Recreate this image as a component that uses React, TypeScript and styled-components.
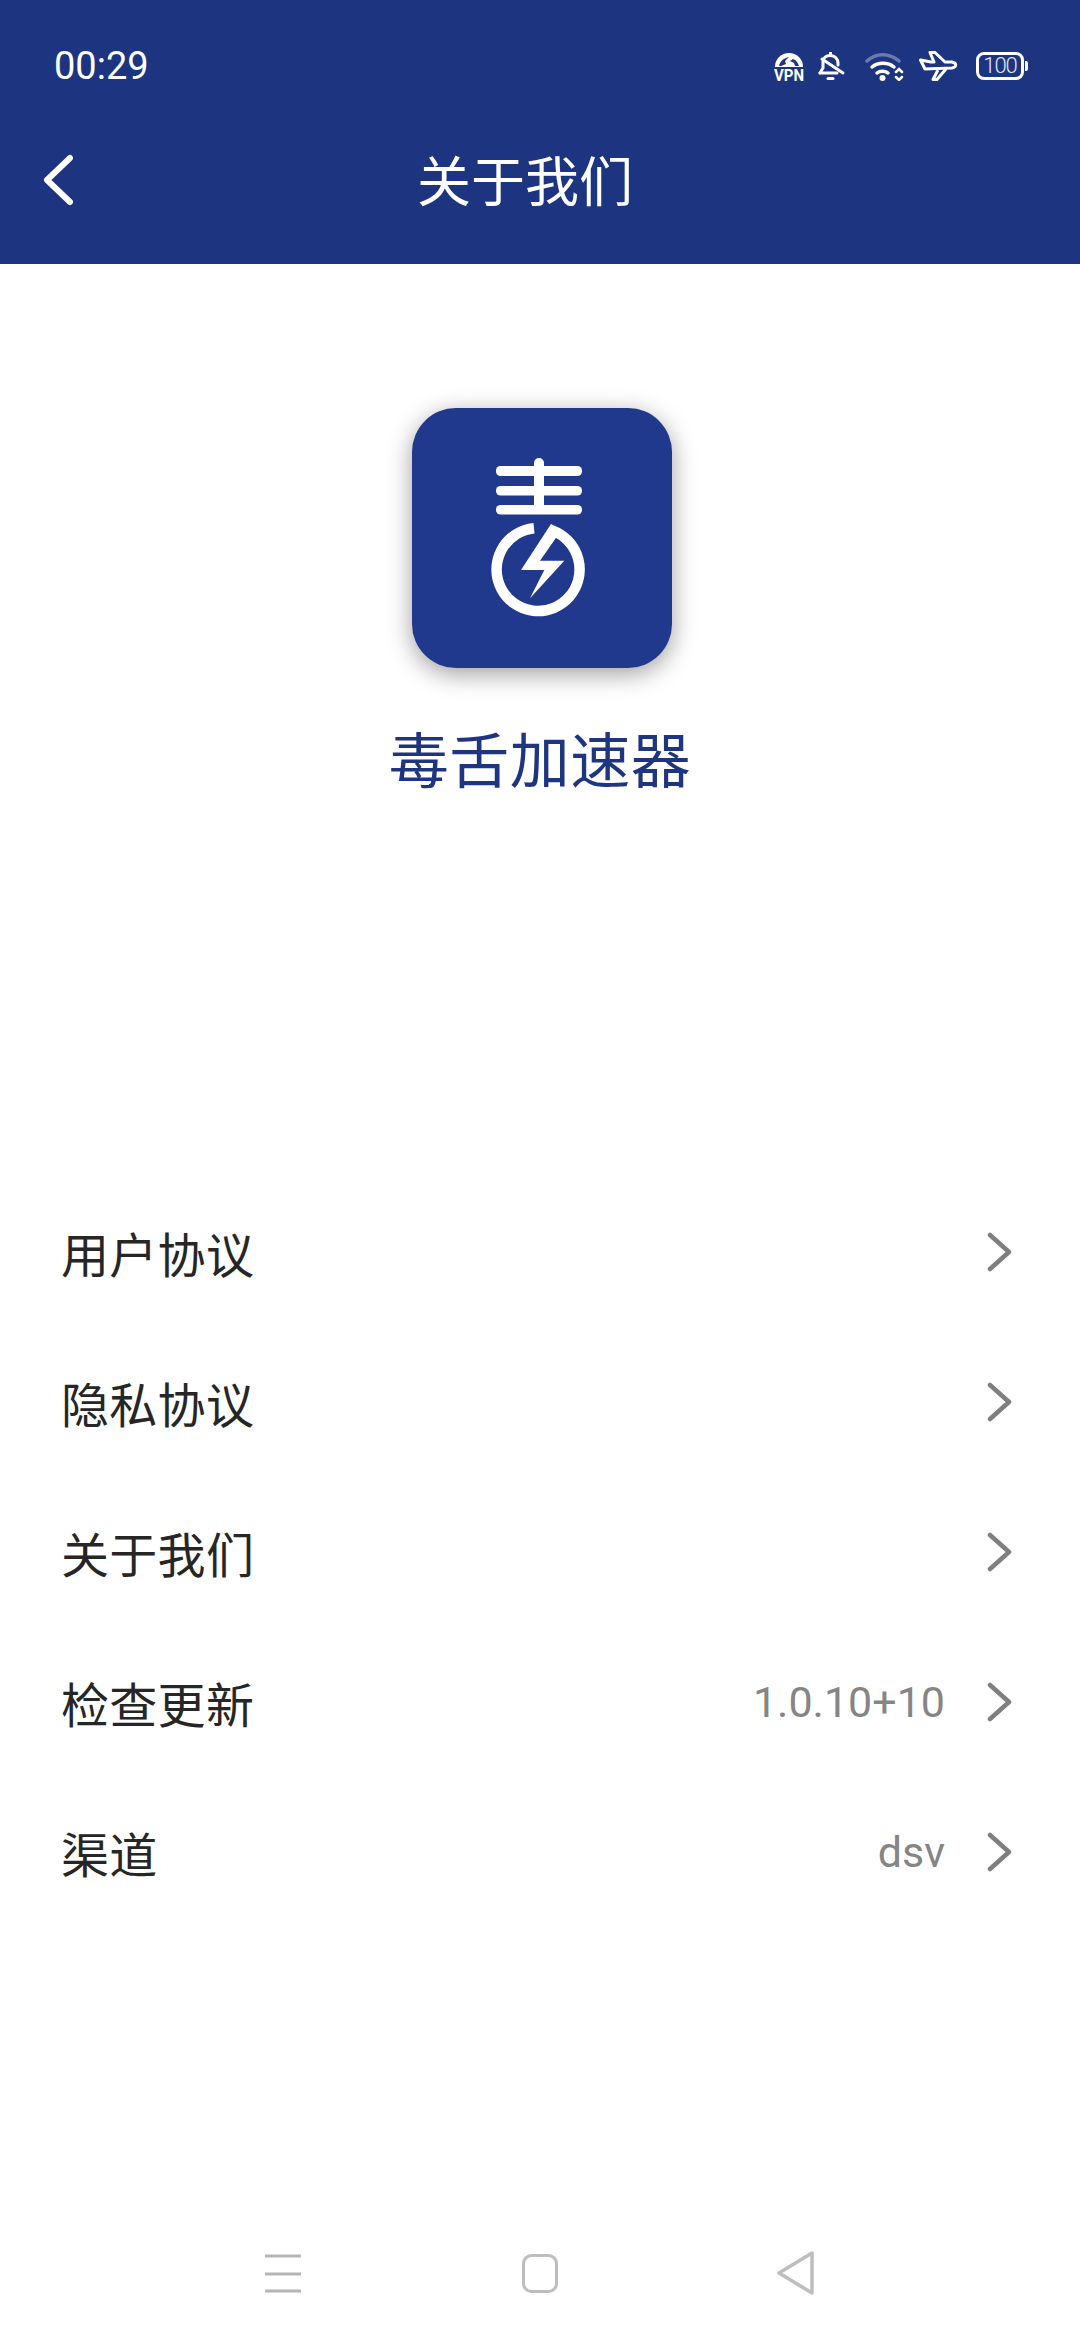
import React from "react";
import styled, { createGlobalStyle } from "styled-components";

const Global = createGlobalStyle`
  html, body { margin: 0; padding: 0; background: #fff; }
  body { font-family: Roboto, "Noto Sans CJK SC", sans-serif; }
`;
const cjk = `"Noto Sans CJK SC", Roboto, sans-serif`;

const Page = styled.div`
  width: 1080px;
  height: 2340px;
  display: flex;
  flex-direction: column;
  background: #fff;
  overflow: hidden;
`;
const Top = styled.header`
  height: 264px;
  flex: none;
  background: #1d3480;
  color: #fff;
  display: flex;
  flex-direction: column;
`;
const StatusBar = styled.div`
  height: 132px;
  flex: none;
  display: flex;
  align-items: center;
  justify-content: space-between;
  padding: 0 53px 0 54px;
`;
const Clock = styled.span`
  font-family: Roboto, sans-serif;
  font-size: 38px;
  line-height: 1;
`;
const StatusIcons = styled.div`
  display: flex;
  align-items: center;
  gap: 14px;
`;
const VpnSvg = styled.svg`
  margin: 0 -4px -5px;
`;
const NavBar = styled.div`
  flex: 1;
  display: flex;
  align-items: flex-start;
  padding-left: 42px;
`;
const BackBtn = styled.svg`
  width: 32px;
  height: 52px;
  margin-top: 22px;
`;
const Title = styled.h1`
  margin: 13px 0 0 343px;
  font-family: ${cjk};
  font-size: 54px;
  line-height: 68px;
  font-weight: 400;
`;
const Brand = styled.section`
  flex: none;
  display: flex;
  flex-direction: column;
  align-items: center;
  padding-top: 144px;
`;
const LogoBox = styled.div`
  width: 260px;
  height: 260px;
  margin-left: 4px;
  border-radius: 44px;
  background: #20398c;
  box-shadow: 0 6px 24px rgba(0, 0, 0, 0.38);
  overflow: hidden;
`;
const AppName = styled.div`
  margin-top: 49px;
  font-family: ${cjk};
  font-size: 60px;
  letter-spacing: 0.5px;
  line-height: 80px;
  color: #1f3580;
`;
const List = styled.ul`
  list-style: none;
  margin: 380px 0 0;
  padding: 0 67px 0 61px;
`;
const Row = styled.li`
  height: 150px;
  display: flex;
  align-items: center;
  justify-content: space-between;
`;
const RowLabel = styled.span`
  font-family: ${cjk};
  font-size: 48px;
  letter-spacing: 0.3px;
  color: #262626;
`;
const RowRight = styled.div`
  display: flex;
  align-items: center;
  gap: 41px;
`;
const RowValue = styled.span`
  font-family: Roboto, sans-serif;
  font-size: 43px;
  color: #858585;
`;
const Chevron = styled.svg`
  width: 27px;
  height: 40px;
  margin-top: -1px;
`;
const BottomNav = styled.nav`
  margin-top: auto;
  height: 95px;
  flex: none;
  display: flex;
  justify-content: center;
  align-items: flex-start;
  gap: 218px;
`;
const NavIcon = styled.svg`
  width: 38px;
  height: 50px;
  margin-top: 3px;
`;
const Battery = styled.div`
  width: 48px;
  height: 28px;
  margin-right: 3px;
  box-sizing: border-box;
  border: 3px solid #fff;
  border-radius: 8px;
  display: flex;
  align-items: center;
  justify-content: center;
  position: relative;
  font-family: Roboto, sans-serif;
  font-size: 22px;
  line-height: 22px;
  font-weight: 300;
  letter-spacing: -1px;
  color: #e4e7f2;
  &::after {
    content: "";
    position: absolute;
    right: -7px;
    top: 6px;
    width: 3px;
    height: 10px;
    background: #fff;
    border-radius: 0 2px 2px 0;
  }
`;

const rows = [
  { label: "用户协议" },
  { label: "隐私协议" },
  { label: "关于我们" },
  { label: "检查更新", value: "1.0.10+10" },
  { label: "渠道", value: "dsv" },
];

const Logo = () => (
  <svg width="260" height="260" viewBox="0 0 260 260" fill="none">
    <rect x="84" y="58" width="86" height="10" rx="4.5" fill="#fff" />
    <rect x="84" y="78" width="86" height="9.5" rx="4.5" fill="#fff" />
    <rect x="84" y="97" width="86" height="9.5" rx="4.5" fill="#fff" />
    <rect x="122" y="50" width="10" height="52" rx="5" fill="#fff" />
    <path d="M 122 120.2 A 41.5 41.5 0 1 0 140 122.4" stroke="#fff" strokeWidth="10.5" />
    <path
      d="M139 116 L109 162 L132.3 162 L118 190.3 L152.3 152.7 L128 152.7 L143.7 130.3 L150 122 Z"
      fill="#fff"
    />
  </svg>
);

const VpnIcon = () => (
  <VpnSvg width="38" height="34" viewBox="-4 0 38 34">
    <path d="M1 15 A14 14 0 0 1 29 15 Z" fill="#fff" />
    <path d="M5 14 C6 9 10 6 15 5 L11 9 L12 12 L7 14 Z" fill="#1d3480" />
    <path d="M19 7 C22 8 24 11 25 14 L21 14 L20 11 L16 9 Z" fill="#1d3480" />
    <text x="15" y="28.5" textAnchor="middle" fontFamily="Roboto, sans-serif" fontSize="17" fontWeight="700" fill="#fff" textLength="30" lengthAdjust="spacingAndGlyphs">VPN</text>
  </VpnSvg>
);
const BellOffIcon = () => (
  <svg width="33" height="29" viewBox="0 0 33 29" fill="none" stroke="#fff" strokeWidth="3" strokeLinecap="round" strokeLinejoin="round">
    <path d="M2 21 L5 16 V10 C5 6 8 3.5 12.5 3.5 C17 3.5 20 7 20 11 V13" />
    <path d="M2 21 H19" />
    <path d="M12.5 1 V3" />
    <path d="M10 26.5 H15" />
    <path d="M4 7 L25 21" />
  </svg>
);
const WifiIcon = () => (
  <svg width="40" height="29" viewBox="0 0 40 29" fill="none" strokeLinecap="round">
    <path d="M2 9 C11 0.5 24 0.5 34 9" stroke="#fff" strokeOpacity="0.35" strokeWidth="3.5" />
    <path d="M7 15 C13 10 23 10 29 15" stroke="#fff" strokeWidth="3.5" />
    <path d="M12 21 C15 18.5 20 18.5 23 21" stroke="#fff" strokeWidth="3.5" />
    <circle cx="17.5" cy="26" r="3" fill="#fff" />
    <path d="M31 20 L34 17 L37 20 M31 25 L34 28 L37 25" stroke="#fff" strokeWidth="2.5" />
  </svg>
);
const PlaneIcon = () => (
  <svg width="43" height="30" viewBox="0 0 43 30" fill="none" stroke="#fff" strokeWidth="3" strokeLinejoin="round">
    <path d="M1.5 9 L12 11 L15 11 L11 1.5 H16 L26 11 L33 11 C38 12 38 16 33 17 L6 18 Z" />
    <path d="M19 19 L14 28.5 H18 L27 18" />
  </svg>
);

export default function App() {
  return (
    <Page>
      <Global />
      <Top>
        <StatusBar>
          <Clock>00:29</Clock>
          <StatusIcons>
            <VpnIcon />
            <BellOffIcon />
            <WifiIcon />
            <PlaneIcon />
            <Battery>100</Battery>
          </StatusIcons>
        </StatusBar>
        <NavBar>
          <BackBtn viewBox="0 0 32 52" fill="none" stroke="#fff" strokeWidth="6" strokeLinecap="round" strokeLinejoin="round">
            <path d="M28 4 L5 26 L28 48" />
          </BackBtn>
          <Title>关于我们</Title>
        </NavBar>
      </Top>
      <Brand>
        <LogoBox>
          <Logo />
        </LogoBox>
        <AppName>毒舌加速器</AppName>
      </Brand>
      <List>
        {rows.map((r) => (
          <Row key={r.label}>
            <RowLabel>{r.label}</RowLabel>
            <RowRight>
              {r.value && <RowValue>{r.value}</RowValue>}
              <Chevron viewBox="0 0 27 40" fill="none" stroke="#7f7f7f" strokeWidth="4.5" strokeLinecap="round" strokeLinejoin="round">
                <path d="M4 3 L23 20 L4 37" />
              </Chevron>
            </RowRight>
          </Row>
        ))}
      </List>
      <BottomNav>
        <NavIcon viewBox="0 0 38 50">
          <path d="M0 8 H36 M0 26 H36 M0 43 H36" stroke="#b5b5b5" strokeWidth="3" />
        </NavIcon>
        <NavIcon viewBox="0 0 38 50" fill="none">
          <rect x="2.5" y="7.5" width="33" height="36" rx="8" stroke="#bdbdbd" strokeWidth="3" />
        </NavIcon>
        <NavIcon viewBox="0 0 38 50" fill="none">
          <path d="M35 5 L35 45 L2 25 Z" stroke="#bdbdbd" strokeWidth="3.5" strokeLinejoin="round" />
        </NavIcon>
      </BottomNav>
    </Page>
  );
}
